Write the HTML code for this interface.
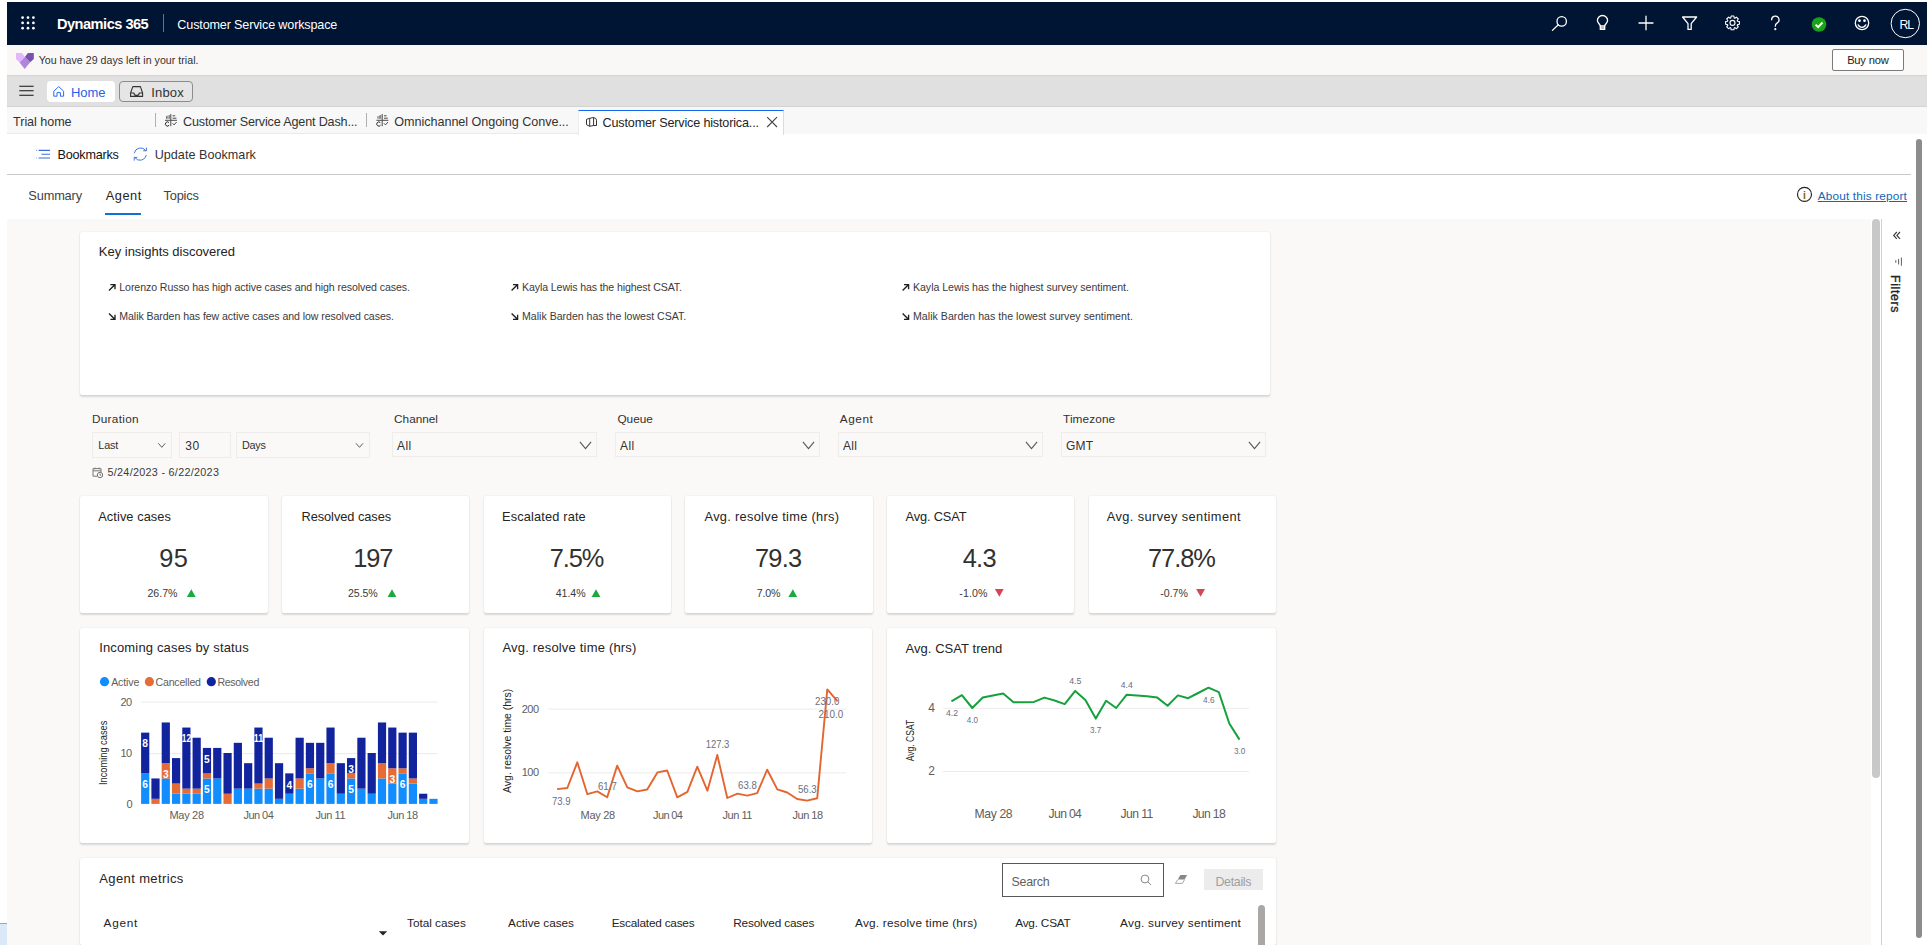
<!DOCTYPE html><html lang="en"><head><meta charset="utf-8"><title>Customer Service workspace - Dynamics 365</title><style>
html,body{margin:0;padding:0;background:#fff;}
body{width:1927px;height:945px;position:relative;overflow:hidden;font-family:"Liberation Sans", sans-serif;}
.b{position:absolute;box-sizing:border-box;}
.t{position:absolute;white-space:pre;line-height:1;margin:0;padding:0;font-weight:400;display:block;}
.card{background:#fff;border-radius:2px;box-shadow:0 1.2px 2px rgba(0,0,0,.13),0 0 1.5px rgba(0,0,0,.10);}
svg.ov{position:absolute;left:0;top:0;width:1927px;height:945px;overflow:hidden;}
svg text{font-family:"Liberation Sans", sans-serif;}
</style></head><body>
<div class="b " style="left:7px;top:2px;width:1920px;height:43px;background:#001433;"></div>
<div class="b " style="left:7px;top:45px;width:1920px;height:30px;background:#f9f8f7;"></div>
<div class="b " style="left:7px;top:75px;width:1920px;height:32px;background:#e0e0e0;box-shadow:inset 0 1px 1px rgba(0,0,0,.06),inset 0 -1px 1px rgba(0,0,0,.06);"></div>
<div class="b " style="left:7px;top:107px;width:1920px;height:27px;background:#f8f8f8;"></div>
<div class="b " style="left:7px;top:133px;width:571px;height:1px;background:#eceae8;"></div>
<div class="b " style="left:578px;top:110px;width:206px;height:25px;background:#fff;border-top:1px solid #1165f0;border-right:1px solid #dcdcdc;border-left:1px solid #ececec;"></div>
<div class="b " style="left:7px;top:135px;width:1904px;height:84px;background:#fff;"></div>
<div class="b " style="left:7px;top:174px;width:1904px;height:1px;background:#c8c8c8;"></div>
<div class="b " style="left:7px;top:219px;width:1864px;height:726px;background:#faf9f8;"></div>
<div class="b " style="left:1872px;top:219px;width:8px;height:559px;background:#c8c8c8;border-radius:4px;"></div>
<div class="b " style="left:1881px;top:219px;width:1px;height:726px;background:#d2d0ce;"></div>
<div class="b " style="left:1916px;top:139px;width:6px;height:799px;background:#8c8c8c;border-radius:3px;"></div>
<div class="b " style="left:0px;top:923px;width:7px;height:22px;background:#dbe8f7;border-top:1px solid #a2a6ab;"></div>
<div class="b " style="left:163px;top:14px;width:1px;height:18px;background:#66728a;"></div>
<div class="b " style="left:1832px;top:49px;width:72px;height:22px;background:#fff;border:1px solid #7a7a7a;border-radius:2px;"></div>
<div class="b " style="left:47px;top:81px;width:68px;height:21px;background:#fff;border-radius:4px;"></div>
<div class="b " style="left:119px;top:81px;width:74px;height:21px;background:#e5e5e5;border:1px solid #8c8c8c;border-radius:4px;"></div>
<div class="b " style="left:155px;top:113px;width:1px;height:14px;background:#b0b0b0;"></div>
<div class="b " style="left:366px;top:113px;width:1px;height:14px;background:#b0b0b0;"></div>
<div class="b " style="left:105px;top:213px;width:36px;height:2px;background:#1170d4;"></div>
<div class="b card" style="left:80px;top:232px;width:1190px;height:163px;background:#fff;"></div>
<div class="b " style="left:92px;top:432px;width:80px;height:26px;background:#faf9f8;border:1px solid #efedeb;"></div>
<div class="b " style="left:179px;top:432px;width:52px;height:26px;background:#faf9f8;border:1px solid #efedeb;"></div>
<div class="b " style="left:236px;top:432px;width:134px;height:26px;background:#faf9f8;border:1px solid #efedeb;"></div>
<div class="b " style="left:392px;top:432px;width:205px;height:25px;background:#faf9f8;border:1px solid #efedeb;"></div>
<div class="b " style="left:615px;top:432px;width:205px;height:25px;background:#faf9f8;border:1px solid #efedeb;"></div>
<div class="b " style="left:838px;top:432px;width:205px;height:25px;background:#faf9f8;border:1px solid #efedeb;"></div>
<div class="b " style="left:1061px;top:432px;width:205px;height:25px;background:#faf9f8;border:1px solid #efedeb;"></div>
<div class="b card" style="left:80px;top:496px;width:187.60000000000002px;height:116.60000000000002px;background:#fff;"></div>
<div class="b card" style="left:282px;top:496px;width:187.2px;height:116.60000000000002px;background:#fff;"></div>
<div class="b card" style="left:484px;top:496px;width:187.20000000000005px;height:116.60000000000002px;background:#fff;"></div>
<div class="b card" style="left:685px;top:496px;width:187.60000000000002px;height:116.60000000000002px;background:#fff;"></div>
<div class="b card" style="left:887px;top:496px;width:187.20000000000005px;height:116.60000000000002px;background:#fff;"></div>
<div class="b card" style="left:1089px;top:496px;width:187px;height:116.60000000000002px;background:#fff;"></div>
<div class="b card" style="left:80px;top:628px;width:389px;height:215px;background:#fff;"></div>
<div class="b card" style="left:484px;top:628px;width:388.20000000000005px;height:215px;background:#fff;"></div>
<div class="b card" style="left:887px;top:628px;width:389px;height:215px;background:#fff;"></div>
<div class="b card" style="left:80px;top:858px;width:1196px;height:87px;background:#fff;"></div>
<div class="b " style="left:1002px;top:863px;width:162px;height:34px;background:#fff;border:1px solid #5a5856;"></div>
<div class="b " style="left:1204px;top:869px;width:59px;height:21px;background:#ececec;"></div>
<div class="b " style="left:1258px;top:905px;width:7px;height:45px;background:#a9a8a7;border-radius:3.5px;"></div>
<svg class="ov" width="1927" height="945" viewBox="0 0 1927 945"><circle cx="22.6" cy="17.6" r="1.35" fill="#fff"/>
<circle cx="28.0" cy="17.6" r="1.35" fill="#fff"/>
<circle cx="33.4" cy="17.6" r="1.35" fill="#fff"/>
<circle cx="22.6" cy="22.9" r="1.35" fill="#fff"/>
<circle cx="28.0" cy="22.9" r="1.35" fill="#fff"/>
<circle cx="33.4" cy="22.9" r="1.35" fill="#fff"/>
<circle cx="22.6" cy="28.2" r="1.35" fill="#fff"/>
<circle cx="28.0" cy="28.2" r="1.35" fill="#fff"/>
<circle cx="33.4" cy="28.2" r="1.35" fill="#fff"/>
<g fill="none" stroke="#fff" stroke-width="1.3" stroke-linecap="round" stroke-linejoin="round"><circle cx="1561.7" cy="21.4" r="4.7"/><path d="M1558.3 24.8 L1552.4 30.4"/></g>
<g fill="none" stroke="#fff" stroke-width="1.3" stroke-linecap="round" stroke-linejoin="round"><path d="M1600.3 26 c0-1.5 -2.9-2.8 -2.9-5.4 a5.1 5.1 0 0 1 10.2 0 c0 2.6-2.9 3.9-2.9 5.4 z"/><path d="M1600.3 26 v3.4 h4.4 v-3.4 M1600.3 27.8 h4.4"/></g>
<g fill="none" stroke="#fff" stroke-width="1.3" stroke-linecap="round" stroke-linejoin="round"><path d="M1646 16.2 V29.8 M1639 23 H1653"/></g>
<g fill="none" stroke="#fff" stroke-width="1.3" stroke-linecap="round" stroke-linejoin="round"><path d="M1682.6 17 h14 l-5.4 6.6 v5.8 h-3.2 v-5.8 z"/></g>
<g fill="none" stroke="#fff" stroke-width="1.3" stroke-linecap="round" stroke-linejoin="round"><path d="M1737.5 21.2 L1739.4 21.5 L1739.4 24.3 L1737.5 24.6 L1737.2 25.3 L1738.3 26.8 L1736.4 28.7 L1734.9 27.6 L1734.2 27.9 L1733.9 29.8 L1731.1 29.8 L1730.8 27.9 L1730.1 27.6 L1728.6 28.7 L1726.7 26.8 L1727.8 25.3 L1727.5 24.6 L1725.6 24.3 L1725.6 21.5 L1727.5 21.2 L1727.8 20.5 L1726.7 19.0 L1728.6 17.1 L1730.1 18.2 L1730.8 17.9 L1731.1 16.0 L1733.9 16.0 L1734.2 17.9 L1734.9 18.2 L1736.4 17.1 L1738.3 19.0 L1737.2 20.5 Z" stroke-width="1.1"/><circle cx="1732.5" cy="22.9" r="2.5" stroke-width="1.1"/></g>
<g fill="none" stroke="#fff" stroke-width="1.3" stroke-linecap="round" stroke-linejoin="round"><path d="M1771.6 19.8 a3.7 3.7 0 1 1 5.4 3.3 c-1.2 0.8 -1.7 1.4 -1.7 3.1"/><circle cx="1775.3" cy="29.2" r="0.45" fill="#fff"/></g>
<circle cx="1819" cy="24.5" r="7.3" fill="#1aa31a"/><path d="M1815.6 24.6 l2.5 2.5 l4.4 -4.6" fill="none" stroke="#fff" stroke-width="1.9"/>
<g fill="none" stroke="#fff" stroke-width="1.3" stroke-linecap="round" stroke-linejoin="round"><circle cx="1862" cy="23" r="6.7"/><path d="M1858.2 24.8 a4.1 4.1 0 0 0 7.6 0"/><circle cx="1859.5" cy="20.7" r="0.7" fill="#fff"/><circle cx="1864.5" cy="20.7" r="0.7" fill="#fff"/></g>
<circle cx="1905.3" cy="23.5" r="14.2" fill="none" stroke="#fff" stroke-width="1"/>
<path d="M16 53.1 H22 L24.9 57.1 L19.6 62.6 L16 59 Z" fill="#e2b7fc"/><path d="M24.9 57.1 L30.2 62.2 L24.6 68.9 L19.6 62.6 Z" fill="#b185db"/><path d="M27.9 53.1 H33.8 V59 L30.2 62.2 L24.9 57.1 Z" fill="#7654ab"/>
<path d="M19.3 86.2 h14.3 M19.3 90.7 h14.3 M19.3 95.2 h14.3" stroke="#111" stroke-width="1.1" fill="none"/>
<path d="M53.8 91.2 l4.9 -4.6 l4.9 4.6 v5 h-3.2 v-3.6 h-3.4 v3.6 h-3.2 z" fill="none" stroke="#2d6cf0" stroke-width="1" stroke-linejoin="round"/>
<path d="M130.6 93 l2.2 -6.4 h7.6 l2.2 6.4 v3.4 h-12 z M130.6 93 h3.4 a2.6 2.4 0 0 0 5.2 0 h3.4" fill="none" stroke="#333" stroke-width="1.1" stroke-linejoin="round"/>
<g stroke="#4a4a4a" stroke-width="1" fill="none"><path d="M170.8 114 V126.2 M165.0 120.3 H177.0"/><path d="M166.5 118.8 V116.2 M167.9 118.8 V115.6 M169.3 118.8 V115" stroke-width="0.8"/><path d="M172.6 115.8 H175.2 M172.6 118.2 H176.4"/><path d="M168.9 122.5 a2.1 2.1 0 1 0 0.3 2.7" stroke="#222"/><path d="M172.6 123.3 l1.5 1.6 l2.5 -2.9"/></g>
<g stroke="#4a4a4a" stroke-width="1" fill="none"><path d="M382.2 114 V126.2 M376.4 120.3 H388.4"/><path d="M377.9 118.8 V116.2 M379.3 118.8 V115.6 M380.7 118.8 V115" stroke-width="0.8"/><path d="M384.0 115.8 H386.6 M384.0 118.2 H387.8"/><path d="M380.3 122.5 a2.1 2.1 0 1 0 0.3 2.7" stroke="#222"/><path d="M384.0 123.3 l1.5 1.6 l2.5 -2.9"/></g>
<g stroke="#333" stroke-width="1" fill="none" stroke-linejoin="round"><path d="M586.5 119.3 L589.7 118.3 V126.3 L586.5 124.7 Z M589.7 118.3 L593.6 117.5 V125.5 L589.7 126.3 M593.6 117.5 Q596.5 118 596.5 120.2 V125.5 H593.6"/></g>
<path d="M767.2 117.2 l9.8 9.8 M777 117.2 l-9.8 9.8" stroke="#444" stroke-width="1.1" fill="none"/>
<g stroke="#3a6fd8" stroke-width="1.1" fill="none"><path d="M38.6 150.4 h11.4 M41.4 154.2 h8.6 M38.6 158 h11.4"/><path d="M36 150.4 h.9 M36 158 h.9" stroke="#7aa0ea"/></g>
<g stroke="#3f7be0" stroke-width="1" fill="none" stroke-linecap="round"><path d="M134.3 152.8 a6.5 6.5 0 0 1 11.4 -2.4"/><path d="M146.3 155.4 a6.5 6.5 0 0 1 -11.4 2.4"/><path d="M146.4 148 v2.8 h-2.8"/><path d="M134.2 160.2 v-2.8 h2.8"/></g>
<g fill="none" stroke="#252423" stroke-width="1.15"><circle cx="1804.5" cy="194.4" r="7"/></g>
<path d="M1896.8 232 l-3.1 3.4 l3.1 3.4 M1900 232 l-3.1 3.4 l3.1 3.4" stroke="#3b3a39" stroke-width="1.15" fill="none"/>
<path d="M1895.8 260.2 V262.8 M1898.6 258.9 V264.4 M1901.4 257.5 V265.7" stroke="#605e5c" stroke-width="1" fill="none"/>
<text x="275" y="-1890.6" transform="rotate(90)" font-size="12.4" fill="#242424" stroke="#242424" stroke-width="0.35" textLength="37.4" lengthAdjust="spacing">Filters</text>
<path d="M109.0 290.6 L114.8 284.8 M110.4 284.6 h4.6 v4.6" stroke="#201f1e" stroke-width="1.35" fill="none"/>
<path d="M109.0 313.4 L114.8 319.2 M110.4 319.4 h4.6 v-4.6" stroke="#201f1e" stroke-width="1.35" fill="none"/>
<path d="M511.6 290.6 L517.4 284.8 M513.0 284.6 h4.6 v4.6" stroke="#201f1e" stroke-width="1.35" fill="none"/>
<path d="M511.6 313.4 L517.4 319.2 M513.0 319.4 h4.6 v-4.6" stroke="#201f1e" stroke-width="1.35" fill="none"/>
<path d="M902.6 290.6 L908.4 284.8 M904.0 284.6 h4.6 v4.6" stroke="#201f1e" stroke-width="1.35" fill="none"/>
<path d="M902.6 313.4 L908.4 319.2 M904.0 319.4 h4.6 v-4.6" stroke="#201f1e" stroke-width="1.35" fill="none"/>
<path d="M158.3 443.3 L161.8 447.3 L165.3 443.3" stroke="#605e5c" stroke-width="1" fill="none"/>
<path d="M356.0 443.3 L359.5 447.3 L363.0 443.3" stroke="#605e5c" stroke-width="1" fill="none"/>
<path d="M579.9 441.8 L585.5 448.59999999999997 L591.1 441.8" stroke="#555" stroke-width="1.05" fill="none"/>
<path d="M802.9 441.8 L808.5 448.59999999999997 L814.1 441.8" stroke="#555" stroke-width="1.05" fill="none"/>
<path d="M1025.9 441.8 L1031.5 448.59999999999997 L1037.1 441.8" stroke="#555" stroke-width="1.05" fill="none"/>
<path d="M1248.9 441.8 L1254.5 448.59999999999997 L1260.1 441.8" stroke="#555" stroke-width="1.05" fill="none"/>
<g stroke="#7a7876" stroke-width="1" fill="none"><path d="M97 476.2 h-4 v-7.6 h8 v3.4 M93 470.8 h8 M95 467.6 v1.6 M99 467.6 v1.6"/><circle cx="100" cy="475" r="2.7"/><path d="M100 473.6 v1.6 h1.2"/></g>
<path d="M186.9 597 h8.8 l-4.4 -7.7 z" fill="#1aab40"/>
<path d="M387.6 597 h8.8 l-4.4 -7.7 z" fill="#1aab40"/>
<path d="M591.6 597 h8.8 l-4.4 -7.7 z" fill="#1aab40"/>
<path d="M788.4 597 h8.8 l-4.4 -7.7 z" fill="#1aab40"/>
<path d="M994.9 589 h8.8 l-4.4 7.8 z" fill="#d64554"/>
<path d="M1196.2 589 h8.8 l-4.4 7.8 z" fill="#d64554"/>
<circle cx="104.5" cy="681.7" r="4.6" fill="#118dff"/>
<text x="111.2" y="686" font-size="10.6" fill="#605e5c" textLength="28.1" lengthAdjust="spacing">Active</text>
<circle cx="149.4" cy="681.7" r="4.6" fill="#e66c37"/>
<text x="155.5" y="686" font-size="10.6" fill="#605e5c" textLength="45.5" lengthAdjust="spacing">Cancelled</text>
<circle cx="211.3" cy="681.7" r="4.6" fill="#12239e"/>
<text x="217.4" y="686" font-size="10.6" fill="#605e5c" textLength="41.9" lengthAdjust="spacing">Resolved</text>
<path d="M141 702.1 H437.8 M141 753.6 H437.8" stroke="#ebebeb" stroke-width="1" fill="none"/>
<text x="120.6" y="706" font-size="11" fill="#605e5c" textLength="11.5" lengthAdjust="spacing">20</text>
<text x="120.6" y="757" font-size="11" fill="#605e5c" textLength="11.5" lengthAdjust="spacing">10</text>
<text x="126.4" y="808" font-size="11" fill="#605e5c">0</text>
<text transform="translate(107.0 785.0) rotate(-90)" font-size="10.8" fill="#252423" textLength="64.3" lengthAdjust="spacingAndGlyphs">Incoming cases</text>
<g shape-rendering="geometricPrecision"><rect x="141.10" y="773.36" width="8.2" height="30.54" fill="#118dff"/><rect x="141.10" y="732.64" width="8.2" height="40.72" fill="#12239e"/><rect x="151.40" y="798.81" width="8.2" height="5.09" fill="#e66c37"/><rect x="151.40" y="778.45" width="8.2" height="20.36" fill="#12239e"/><rect x="161.69" y="778.45" width="8.2" height="25.45" fill="#118dff"/><rect x="161.69" y="763.18" width="8.2" height="15.27" fill="#e66c37"/><rect x="161.69" y="722.46" width="8.2" height="40.72" fill="#12239e"/><rect x="171.99" y="793.72" width="8.2" height="10.18" fill="#118dff"/><rect x="171.99" y="783.54" width="8.2" height="10.18" fill="#e66c37"/><rect x="171.99" y="758.09" width="8.2" height="25.45" fill="#12239e"/><rect x="182.28" y="793.72" width="8.2" height="10.18" fill="#118dff"/><rect x="182.28" y="788.63" width="8.2" height="5.09" fill="#e66c37"/><rect x="182.28" y="727.55" width="8.2" height="61.08" fill="#12239e"/><rect x="192.58" y="793.72" width="8.2" height="10.18" fill="#118dff"/><rect x="192.58" y="788.63" width="8.2" height="5.09" fill="#e66c37"/><rect x="192.58" y="737.73" width="8.2" height="50.90" fill="#12239e"/><rect x="202.88" y="778.45" width="8.2" height="25.45" fill="#118dff"/><rect x="202.88" y="773.36" width="8.2" height="5.09" fill="#e66c37"/><rect x="202.88" y="747.91" width="8.2" height="25.45" fill="#12239e"/><rect x="213.17" y="778.45" width="8.2" height="25.45" fill="#118dff"/><rect x="213.17" y="747.91" width="8.2" height="30.54" fill="#12239e"/><rect x="223.47" y="793.72" width="8.2" height="10.18" fill="#e66c37"/><rect x="223.47" y="753.00" width="8.2" height="40.72" fill="#12239e"/><rect x="233.76" y="788.63" width="8.2" height="15.27" fill="#118dff"/><rect x="233.76" y="742.82" width="8.2" height="45.81" fill="#12239e"/><rect x="244.06" y="788.63" width="8.2" height="15.27" fill="#118dff"/><rect x="244.06" y="763.18" width="8.2" height="25.45" fill="#12239e"/><rect x="254.36" y="788.63" width="8.2" height="15.27" fill="#118dff"/><rect x="254.36" y="783.54" width="8.2" height="5.09" fill="#e66c37"/><rect x="254.36" y="727.55" width="8.2" height="55.99" fill="#12239e"/><rect x="264.65" y="788.63" width="8.2" height="15.27" fill="#118dff"/><rect x="264.65" y="778.45" width="8.2" height="10.18" fill="#e66c37"/><rect x="264.65" y="737.73" width="8.2" height="40.72" fill="#12239e"/><rect x="274.95" y="798.81" width="8.2" height="5.09" fill="#118dff"/><rect x="274.95" y="763.18" width="8.2" height="35.63" fill="#12239e"/><rect x="285.24" y="793.72" width="8.2" height="10.18" fill="#118dff"/><rect x="285.24" y="773.36" width="8.2" height="20.36" fill="#12239e"/><rect x="295.54" y="788.63" width="8.2" height="15.27" fill="#118dff"/><rect x="295.54" y="778.45" width="8.2" height="10.18" fill="#e66c37"/><rect x="295.54" y="737.73" width="8.2" height="40.72" fill="#12239e"/><rect x="305.84" y="773.36" width="8.2" height="30.54" fill="#118dff"/><rect x="305.84" y="768.27" width="8.2" height="5.09" fill="#e66c37"/><rect x="305.84" y="742.82" width="8.2" height="25.45" fill="#12239e"/><rect x="316.13" y="778.45" width="8.2" height="25.45" fill="#118dff"/><rect x="316.13" y="742.82" width="8.2" height="35.63" fill="#12239e"/><rect x="326.43" y="773.36" width="8.2" height="30.54" fill="#118dff"/><rect x="326.43" y="763.18" width="8.2" height="10.18" fill="#e66c37"/><rect x="326.43" y="727.55" width="8.2" height="35.63" fill="#12239e"/><rect x="336.72" y="793.72" width="8.2" height="10.18" fill="#118dff"/><rect x="336.72" y="763.18" width="8.2" height="30.54" fill="#12239e"/><rect x="347.02" y="778.45" width="8.2" height="25.45" fill="#118dff"/><rect x="347.02" y="773.36" width="8.2" height="5.09" fill="#e66c37"/><rect x="347.02" y="758.09" width="8.2" height="15.27" fill="#12239e"/><rect x="357.32" y="788.63" width="8.2" height="15.27" fill="#118dff"/><rect x="357.32" y="737.73" width="8.2" height="50.90" fill="#12239e"/><rect x="367.61" y="793.72" width="8.2" height="10.18" fill="#118dff"/><rect x="367.61" y="753.00" width="8.2" height="40.72" fill="#12239e"/><rect x="377.91" y="778.45" width="8.2" height="25.45" fill="#118dff"/><rect x="377.91" y="763.18" width="8.2" height="15.27" fill="#e66c37"/><rect x="377.91" y="722.46" width="8.2" height="40.72" fill="#12239e"/><rect x="388.20" y="783.54" width="8.2" height="20.36" fill="#118dff"/><rect x="388.20" y="768.27" width="8.2" height="15.27" fill="#e66c37"/><rect x="388.20" y="727.55" width="8.2" height="40.72" fill="#12239e"/><rect x="398.50" y="773.36" width="8.2" height="30.54" fill="#118dff"/><rect x="398.50" y="768.27" width="8.2" height="5.09" fill="#e66c37"/><rect x="398.50" y="732.64" width="8.2" height="35.63" fill="#12239e"/><rect x="408.80" y="783.54" width="8.2" height="20.36" fill="#118dff"/><rect x="408.80" y="778.45" width="8.2" height="5.09" fill="#e66c37"/><rect x="408.80" y="732.64" width="8.2" height="45.81" fill="#12239e"/><rect x="419.09" y="798.81" width="8.2" height="5.09" fill="#118dff"/><rect x="419.09" y="793.72" width="8.2" height="5.09" fill="#12239e"/><rect x="429.39" y="798.81" width="8.2" height="5.09" fill="#118dff"/></g>
<text x="142.3" y="747.3" font-size="10.4" font-weight="700" fill="#fff" textLength="5.7" lengthAdjust="spacingAndGlyphs">8</text>
<text x="142.3" y="788.4" font-size="10.4" font-weight="700" fill="#fff" textLength="5.7" lengthAdjust="spacingAndGlyphs">6</text>
<text x="162.9" y="778.3" font-size="10.4" font-weight="700" fill="#fff" textLength="5.7" lengthAdjust="spacingAndGlyphs">3</text>
<text x="181.7" y="742.1" font-size="10.4" font-weight="700" fill="#fff" textLength="9.4" lengthAdjust="spacingAndGlyphs">12</text>
<text x="204.1" y="763.1" font-size="10.4" font-weight="700" fill="#fff" textLength="5.7" lengthAdjust="spacingAndGlyphs">5</text>
<text x="204.1" y="793.2" font-size="10.4" font-weight="700" fill="#fff" textLength="5.7" lengthAdjust="spacingAndGlyphs">5</text>
<text x="253.8" y="742.1" font-size="10.4" font-weight="700" fill="#fff" textLength="9.4" lengthAdjust="spacingAndGlyphs">11</text>
<text x="286.5" y="788.9" font-size="10.4" font-weight="700" fill="#fff" textLength="5.7" lengthAdjust="spacingAndGlyphs">4</text>
<text x="307.1" y="788.4" font-size="10.4" font-weight="700" fill="#fff" textLength="5.7" lengthAdjust="spacingAndGlyphs">6</text>
<text x="327.7" y="788.4" font-size="10.4" font-weight="700" fill="#fff" textLength="5.7" lengthAdjust="spacingAndGlyphs">6</text>
<text x="348.3" y="773.1" font-size="10.4" font-weight="700" fill="#fff" textLength="5.7" lengthAdjust="spacingAndGlyphs">3</text>
<text x="348.3" y="793.0" font-size="10.4" font-weight="700" fill="#fff" textLength="5.7" lengthAdjust="spacingAndGlyphs">5</text>
<text x="389.5" y="782.9" font-size="10.4" font-weight="700" fill="#fff" textLength="5.7" lengthAdjust="spacingAndGlyphs">3</text>
<text x="399.8" y="788.4" font-size="10.4" font-weight="700" fill="#fff" textLength="5.7" lengthAdjust="spacingAndGlyphs">6</text>
<text x="169.5" y="819" font-size="11" fill="#605e5c" textLength="34.5" lengthAdjust="spacing">May 28</text>
<text x="243.6" y="819" font-size="11" fill="#605e5c" textLength="30.2" lengthAdjust="spacing">Jun 04</text>
<text x="315.5" y="819" font-size="11" fill="#605e5c" textLength="30.0" lengthAdjust="spacing">Jun 11</text>
<text x="387.6" y="819" font-size="11" fill="#605e5c" textLength="30.5" lengthAdjust="spacing">Jun 18</text>
<path d="M548.4 709.1 H846.4 M548.4 772.8 H846.4" stroke="#ebebeb" stroke-width="1" fill="none"/>
<text x="521.7" y="713" font-size="11" fill="#605e5c" textLength="17.3" lengthAdjust="spacing">200</text>
<text x="521.7" y="776" font-size="11" fill="#605e5c" textLength="17.3" lengthAdjust="spacing">100</text>
<text transform="translate(511.4 792.9) rotate(-90)" font-size="11" fill="#252423" textLength="104.1" lengthAdjust="spacingAndGlyphs">Avg. resolve time (hrs)</text>
<polyline fill="none" stroke="#e4652f" stroke-width="1.9" stroke-linejoin="round" points="557.1,789.1 567.3,788.0 577.3,762.3 587.4,794.2 597.3,791.4 607.2,797.2 617.2,765.6 627.3,787.3 637.4,791.4 647.2,789.5 657.4,772.4 667.2,770.5 677.3,797.3 687.4,791.8 697.3,766.7 707.4,790.7 717.3,755 727.3,798 737.4,793.6 747.3,795.6 757.2,793.1 767.2,769.7 777.3,789.4 787.2,792.5 797.2,799 807.1,800.6 817.2,798.3 827.3,689.4 837.6,701.3"/>
<text x="551.9" y="805" font-size="10.4" fill="#6b6f7b" textLength="18.6" lengthAdjust="spacingAndGlyphs">73.9</text>
<text x="598.0" y="790" font-size="10.4" fill="#6b6f7b" textLength="18.8" lengthAdjust="spacingAndGlyphs">61.7</text>
<text x="705.7" y="748" font-size="10.4" fill="#6b6f7b" textLength="23.7" lengthAdjust="spacingAndGlyphs">127.3</text>
<text x="738.1" y="789" font-size="10.4" fill="#6b6f7b" textLength="18.8" lengthAdjust="spacingAndGlyphs">63.8</text>
<text x="797.9" y="793" font-size="10.4" fill="#6b6f7b" textLength="18.8" lengthAdjust="spacingAndGlyphs">56.3</text>
<text x="815.0" y="705" font-size="10.4" fill="#6b6f7b" textLength="24.4" lengthAdjust="spacingAndGlyphs">230.0</text>
<text x="818.5" y="718" font-size="10.4" fill="#6b6f7b" textLength="24.8" lengthAdjust="spacingAndGlyphs">210.0</text>
<text x="580.5" y="819" font-size="11" fill="#605e5c" textLength="34.7" lengthAdjust="spacing">May 28</text>
<text x="653.1" y="819" font-size="11" fill="#605e5c" textLength="29.8" lengthAdjust="spacing">Jun 04</text>
<text x="722.4" y="819" font-size="11" fill="#605e5c" textLength="30.0" lengthAdjust="spacing">Jun 11</text>
<text x="792.6" y="819" font-size="11" fill="#605e5c" textLength="30.5" lengthAdjust="spacing">Jun 18</text>
<path d="M942.8 708.3 H1248.8 M942.8 771.5 H1248.8" stroke="#ebebeb" stroke-width="1" fill="none"/>
<text x="928.2" y="712" font-size="12" fill="#605e5c">4</text>
<text x="928.2" y="775" font-size="12" fill="#605e5c">2</text>
<text transform="translate(913.5 761.2) rotate(-90)" font-size="10.4" fill="#252423" textLength="41.4" lengthAdjust="spacingAndGlyphs">Avg. CSAT</text>
<polyline fill="none" stroke="#16a13d" stroke-width="2" stroke-linejoin="round" points="951.4,701.4 961.9,695.2 972.3,708 982.8,697.5 992.9,695.4 1003.2,693.5 1013.5,702.3 1023.8,702.3 1034,701.9 1044.4,697.6 1054.6,700.5 1064.7,704.1 1075.2,690.9 1085.4,700 1095.8,718.6 1106.1,700.8 1116.2,708 1126.7,694.7 1136.9,695.4 1147,696.3 1157.3,697.6 1167.6,705.8 1177.9,695.4 1188.1,698.2 1198.2,693 1208.5,687.7 1218.8,692.1 1229.3,723.5 1239.5,739.6"/>
<text x="946.0" y="716" font-size="9.4" fill="#6b6f7b" textLength="12.0" lengthAdjust="spacingAndGlyphs">4.2</text>
<text x="966.8" y="723" font-size="9.4" fill="#6b6f7b" textLength="11.2" lengthAdjust="spacingAndGlyphs">4.0</text>
<text x="1069.2" y="684" font-size="9.4" fill="#6b6f7b" textLength="12.2" lengthAdjust="spacingAndGlyphs">4.5</text>
<text x="1090.0" y="733" font-size="9.4" fill="#6b6f7b" textLength="11.4" lengthAdjust="spacingAndGlyphs">3.7</text>
<text x="1120.8" y="688" font-size="9.4" fill="#6b6f7b" textLength="12.0" lengthAdjust="spacingAndGlyphs">4.4</text>
<text x="1203.1" y="703" font-size="9.4" fill="#6b6f7b" textLength="11.4" lengthAdjust="spacingAndGlyphs">4.6</text>
<text x="1233.9" y="754" font-size="9.4" fill="#6b6f7b" textLength="11.4" lengthAdjust="spacingAndGlyphs">3.0</text>
<text x="974.5" y="818" font-size="12.2" fill="#605e5c" textLength="38.1" lengthAdjust="spacing">May 28</text>
<text x="1048.6" y="818" font-size="12.2" fill="#605e5c" textLength="33.3" lengthAdjust="spacing">Jun 04</text>
<text x="1120.5" y="818" font-size="12.2" fill="#605e5c" textLength="32.8" lengthAdjust="spacing">Jun 11</text>
<text x="1192.4" y="818" font-size="12.2" fill="#605e5c" textLength="33.3" lengthAdjust="spacing">Jun 18</text>
<path d="M378.8 931.2 h8.4 l-4.2 4.2 z" fill="#252423"/>
<g stroke="#8a8886" stroke-width="1" fill="none"><circle cx="1145" cy="879" r="3.9"/><path d="M1147.8 881.8 l3.2 3.2"/></g>
<path d="M1180.3 875.1 H1187.1 L1184.6 879.6 H1177.8 Z" fill="#8a8886"/><path d="M1177.8 879.6 L1175.4 883.4 H1182.4 L1184.6 879.6" fill="none" stroke="#a19f9d" stroke-width="0.9"/></svg>
<span class="t" style="left:56.97px;top:17.01px;font-size:14.6px;color:#fff;font-weight:700;letter-spacing:-0.509px;">Dynamics 365</span>
<span class="t" style="left:177.37px;top:19.01px;font-size:12.6px;color:#fff;letter-spacing:-0.153px;">Customer Service workspace</span>
<span class="t" style="left:1899.49px;top:19.01px;font-size:12.2px;color:#fff;letter-spacing:-1.098px;">RL</span>
<span class="t" style="left:38.67px;top:55.01px;font-size:10.6px;color:#323130;letter-spacing:0.035px;">You have 29 days left in your trial.</span>
<span class="t" style="left:1847.14px;top:55.01px;font-size:11.2px;color:#201f1e;letter-spacing:-0.217px;">Buy now</span>
<span class="t" style="left:70.95px;top:86.00px;font-size:13px;color:#2462e8;letter-spacing:-0.062px;">Home</span>
<span class="t" style="left:151.35px;top:86.00px;font-size:13px;color:#333;letter-spacing:0.122px;">Inbox</span>
<span class="t" style="left:13.07px;top:116.01px;font-size:12.6px;color:#333;letter-spacing:-0.052px;">Trial home</span>
<span class="t" style="left:183.07px;top:116.01px;font-size:12.6px;color:#333;letter-spacing:-0.160px;">Customer Service Agent Dash...</span>
<span class="t" style="left:394.37px;top:116.01px;font-size:12.6px;color:#333;letter-spacing:-0.047px;">Omnichannel Ongoing Conve...</span>
<span class="t" style="left:602.57px;top:117.01px;font-size:12.6px;color:#242424;letter-spacing:-0.162px;">Customer Service historica...</span>
<span class="t" style="left:57.47px;top:149.01px;font-size:12.6px;color:#111;letter-spacing:-0.193px;">Bookmarks</span>
<span class="t" style="left:154.67px;top:149.01px;font-size:12.6px;color:#333;letter-spacing:0.032px;">Update Bookmark</span>
<span class="t" style="left:28.36px;top:190.01px;font-size:12.8px;color:#424242;letter-spacing:-0.178px;">Summary</span>
<span class="t" style="left:105.66px;top:190.01px;font-size:12.8px;color:#242424;letter-spacing:0.557px;">Agent</span>
<span class="t" style="left:163.56px;top:190.01px;font-size:12.8px;color:#424242;letter-spacing:-0.200px;">Topics</span>
<span class="t" style="left:1803.00px;top:190.00px;font-size:10.5px;color:#8f6200;font-weight:700;">i</span>
<span class="t" style="left:1817.81px;top:191.01px;font-size:11.8px;color:#1267b4;letter-spacing:0.157px;text-decoration:underline;">About this report</span>
<span class="t" style="left:98.85px;top:245.00px;font-size:13px;color:#242424;letter-spacing:-0.017px;">Key insights discovered</span>
<span class="t" style="left:119.27px;top:282.01px;font-size:10.6px;color:#3b3a39;letter-spacing:-0.084px;">Lorenzo Russo has high active cases and high resolved cases.</span>
<span class="t" style="left:119.27px;top:311.01px;font-size:10.6px;color:#3b3a39;letter-spacing:-0.069px;">Malik Barden has few active cases and low resolved cases.</span>
<span class="t" style="left:522.07px;top:282.01px;font-size:10.6px;color:#3b3a39;letter-spacing:-0.114px;">Kayla Lewis has the highest CSAT.</span>
<span class="t" style="left:522.07px;top:311.01px;font-size:10.6px;color:#3b3a39;letter-spacing:-0.016px;">Malik Barden has the lowest CSAT.</span>
<span class="t" style="left:912.97px;top:282.01px;font-size:10.6px;color:#3b3a39;letter-spacing:-0.030px;">Kayla Lewis has the highest survey sentiment.</span>
<span class="t" style="left:912.97px;top:311.01px;font-size:10.6px;color:#3b3a39;letter-spacing:0.032px;">Malik Barden has the lowest survey sentiment.</span>
<span class="t" style="left:91.91px;top:414.01px;font-size:11.8px;color:#323130;letter-spacing:0.312px;">Duration</span>
<span class="t" style="left:394.11px;top:414.01px;font-size:11.8px;color:#323130;letter-spacing:-0.012px;">Channel</span>
<span class="t" style="left:617.41px;top:414.01px;font-size:11.8px;color:#323130;letter-spacing:0.015px;">Queue</span>
<span class="t" style="left:839.81px;top:414.01px;font-size:11.8px;color:#323130;letter-spacing:0.534px;">Agent</span>
<span class="t" style="left:1063.01px;top:414.01px;font-size:11.8px;color:#323130;letter-spacing:0.117px;">Timezone</span>
<span class="t" style="left:98.36px;top:440.01px;font-size:10.8px;color:#323130;letter-spacing:-0.147px;">Last</span>
<span class="t" style="left:185.30px;top:440.00px;font-size:12px;color:#323130;letter-spacing:0.641px;">30</span>
<span class="t" style="left:241.96px;top:440.01px;font-size:10.8px;color:#323130;letter-spacing:-0.210px;">Days</span>
<span class="t" style="left:397.00px;top:440.00px;font-size:12px;color:#323130;letter-spacing:0.378px;">All</span>
<span class="t" style="left:620.00px;top:440.00px;font-size:12px;color:#323130;letter-spacing:0.378px;">All</span>
<span class="t" style="left:843.00px;top:440.00px;font-size:12px;color:#323130;letter-spacing:0.278px;">All</span>
<span class="t" style="left:1066.00px;top:440.00px;font-size:12px;color:#323130;letter-spacing:0.214px;">GMT</span>
<span class="t" style="left:107.46px;top:467.01px;font-size:10.8px;color:#3b3a39;letter-spacing:0.290px;">5/24/2023 - 6/22/2023</span>
<span class="t" style="left:98.26px;top:511.01px;font-size:12.8px;color:#252423;letter-spacing:0.076px;">Active cases</span>
<span class="t" style="left:159.33px;top:546.00px;font-size:25.4px;color:#323130;letter-spacing:0.190px;">95</span>
<span class="t" style="left:147.47px;top:588.01px;font-size:10.6px;color:#3b3a39;letter-spacing:-0.022px;">26.7%</span>
<span class="t" style="left:301.46px;top:511.01px;font-size:12.8px;color:#252423;letter-spacing:-0.051px;">Resolved cases</span>
<span class="t" style="left:353.33px;top:546.00px;font-size:25.4px;color:#323130;letter-spacing:-1.168px;">197</span>
<span class="t" style="left:348.07px;top:588.01px;font-size:10.6px;color:#3b3a39;letter-spacing:-0.097px;">25.5%</span>
<span class="t" style="left:502.06px;top:511.01px;font-size:12.8px;color:#252423;letter-spacing:0.144px;">Escalated rate</span>
<span class="t" style="left:549.63px;top:546.00px;font-size:25.4px;color:#323130;letter-spacing:-1.078px;">7.5%</span>
<span class="t" style="left:555.67px;top:588.01px;font-size:10.6px;color:#3b3a39;letter-spacing:-0.022px;">41.4%</span>
<span class="t" style="left:704.56px;top:511.01px;font-size:12.8px;color:#252423;letter-spacing:0.300px;">Avg. resolve time (hrs)</span>
<span class="t" style="left:755.03px;top:546.00px;font-size:25.4px;color:#323130;letter-spacing:-0.794px;">79.3</span>
<span class="t" style="left:756.77px;top:588.01px;font-size:10.6px;color:#3b3a39;letter-spacing:-0.165px;">7.0%</span>
<span class="t" style="left:905.46px;top:511.01px;font-size:12.8px;color:#252423;letter-spacing:-0.131px;">Avg. CSAT</span>
<span class="t" style="left:962.63px;top:546.00px;font-size:25.4px;color:#323130;letter-spacing:-0.628px;">4.3</span>
<span class="t" style="left:959.37px;top:588.01px;font-size:10.6px;color:#3b3a39;letter-spacing:0.068px;">-1.0%</span>
<span class="t" style="left:1106.76px;top:511.01px;font-size:12.8px;color:#252423;letter-spacing:0.405px;">Avg. survey sentiment</span>
<span class="t" style="left:1147.93px;top:546.00px;font-size:25.4px;color:#323130;letter-spacing:-1.015px;">77.8%</span>
<span class="t" style="left:1160.27px;top:588.01px;font-size:10.6px;color:#3b3a39;letter-spacing:-0.007px;">-0.7%</span>
<span class="t" style="left:99.15px;top:641.00px;font-size:13px;color:#252423;letter-spacing:0.158px;">Incoming cases by status</span>
<span class="t" style="left:502.45px;top:641.00px;font-size:13px;color:#252423;letter-spacing:0.187px;">Avg. resolve time (hrs)</span>
<span class="t" style="left:905.55px;top:642.00px;font-size:13px;color:#252423;letter-spacing:0.049px;">Avg. CSAT trend</span>
<span class="t" style="left:99.25px;top:872.00px;font-size:13px;color:#252423;letter-spacing:0.385px;">Agent metrics</span>
<span class="t" style="left:103.61px;top:918.01px;font-size:11.8px;color:#252423;letter-spacing:0.709px;">Agent</span>
<span class="t" style="left:407.11px;top:918.01px;font-size:11.8px;color:#252423;letter-spacing:-0.034px;">Total cases</span>
<span class="t" style="left:508.11px;top:918.01px;font-size:11.8px;color:#252423;letter-spacing:-0.032px;">Active cases</span>
<span class="t" style="left:611.71px;top:918.01px;font-size:11.8px;color:#252423;letter-spacing:-0.216px;">Escalated cases</span>
<span class="t" style="left:733.21px;top:918.01px;font-size:11.8px;color:#252423;letter-spacing:-0.162px;">Resolved cases</span>
<span class="t" style="left:855.11px;top:918.01px;font-size:11.8px;color:#252423;letter-spacing:0.195px;">Avg. resolve time (hrs)</span>
<span class="t" style="left:1015.21px;top:918.01px;font-size:11.8px;color:#252423;letter-spacing:-0.211px;">Avg. CSAT</span>
<span class="t" style="left:1120.11px;top:918.01px;font-size:11.8px;color:#252423;letter-spacing:0.247px;">Avg. survey sentiment</span>
<span class="t" style="left:1011.48px;top:876.00px;font-size:12.4px;color:#605e5c;letter-spacing:-0.225px;">Search</span>
<span class="t" style="left:1215.38px;top:876.00px;font-size:12.4px;color:#a19f9d;letter-spacing:-0.289px;">Details</span>
</body></html>
